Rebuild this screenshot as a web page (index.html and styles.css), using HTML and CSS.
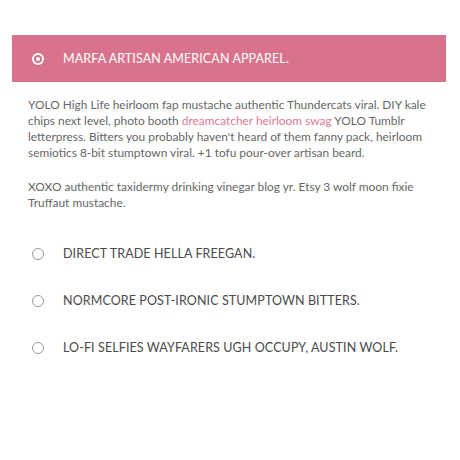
FILE: index.html
```html
<!DOCTYPE html>
<html>
<head>
<meta charset="utf-8">
<link rel="stylesheet" href="styles.css">
</head>
<body>
<div class="accordion">
  <div class="item active">
    <div class="head"><span class="radio on"></span><span class="title">MARFA ARTISAN AMERICAN APPAREL.</span></div>
    <div class="body">
      <p>YOLO High Life heirloom fap mustache authentic Thundercats viral. DIY kale chips next level, photo booth <a href="#">dreamcatcher heirloom swag</a> YOLO Tumblr letterpress. Bitters you probably haven't heard of them fanny pack, heirloom semiotics 8-bit stumptown viral. +1 tofu pour-over artisan beard.</p>
      <p>XOXO authentic taxidermy drinking vinegar blog yr. Etsy 3 wolf moon fixie Truffaut mustache.</p>
    </div>
  </div>
  <div class="item"><div class="head"><span class="radio"></span><span class="title">DIRECT TRADE HELLA FREEGAN.</span></div></div>
  <div class="item"><div class="head"><span class="radio"></span><span class="title">NORMCORE POST-IRONIC STUMPTOWN BITTERS.</span></div></div>
  <div class="item"><div class="head"><span class="radio"></span><span class="title">LO-FI SELFIES WAYFARERS UGH OCCUPY, AUSTIN WOLF.</span></div></div>
</div>
</body>
</html>
```
FILE: styles.css
```css
html, body { margin: 0; padding: 0; background: #fff; }
body { font-family: Lato, "Open Sans", sans-serif; color: #555; }
.accordion { padding: 35px 14px 0 12px; }
.item .head { display: flex; align-items: center; height: 47px; padding-left: 20px; color: #4a4a4a; }
.item.active .head { background: #d9738b; color: #fff; }
.radio { width: 12px; height: 12px; border-radius: 50%; border: 1px solid #999; box-sizing: border-box; margin-right: 19px; flex: none; }
.radio.on { border: 2px solid #fff; position: relative; }
.radio.on::after { content: ""; position: absolute; left: 2px; top: 2px; width: 4px; height: 4px; border-radius: 50%; background: #fff; }
.title { font-size: 12.5px; letter-spacing: 0.1px; }
.body { padding: 15px 20px 1px 16px; font-size: 11.9px; line-height: 16px; color: #666; }
.body p { margin: 0 0 18px; }
.body a { color: #e07a93; text-decoration: none; }
```
